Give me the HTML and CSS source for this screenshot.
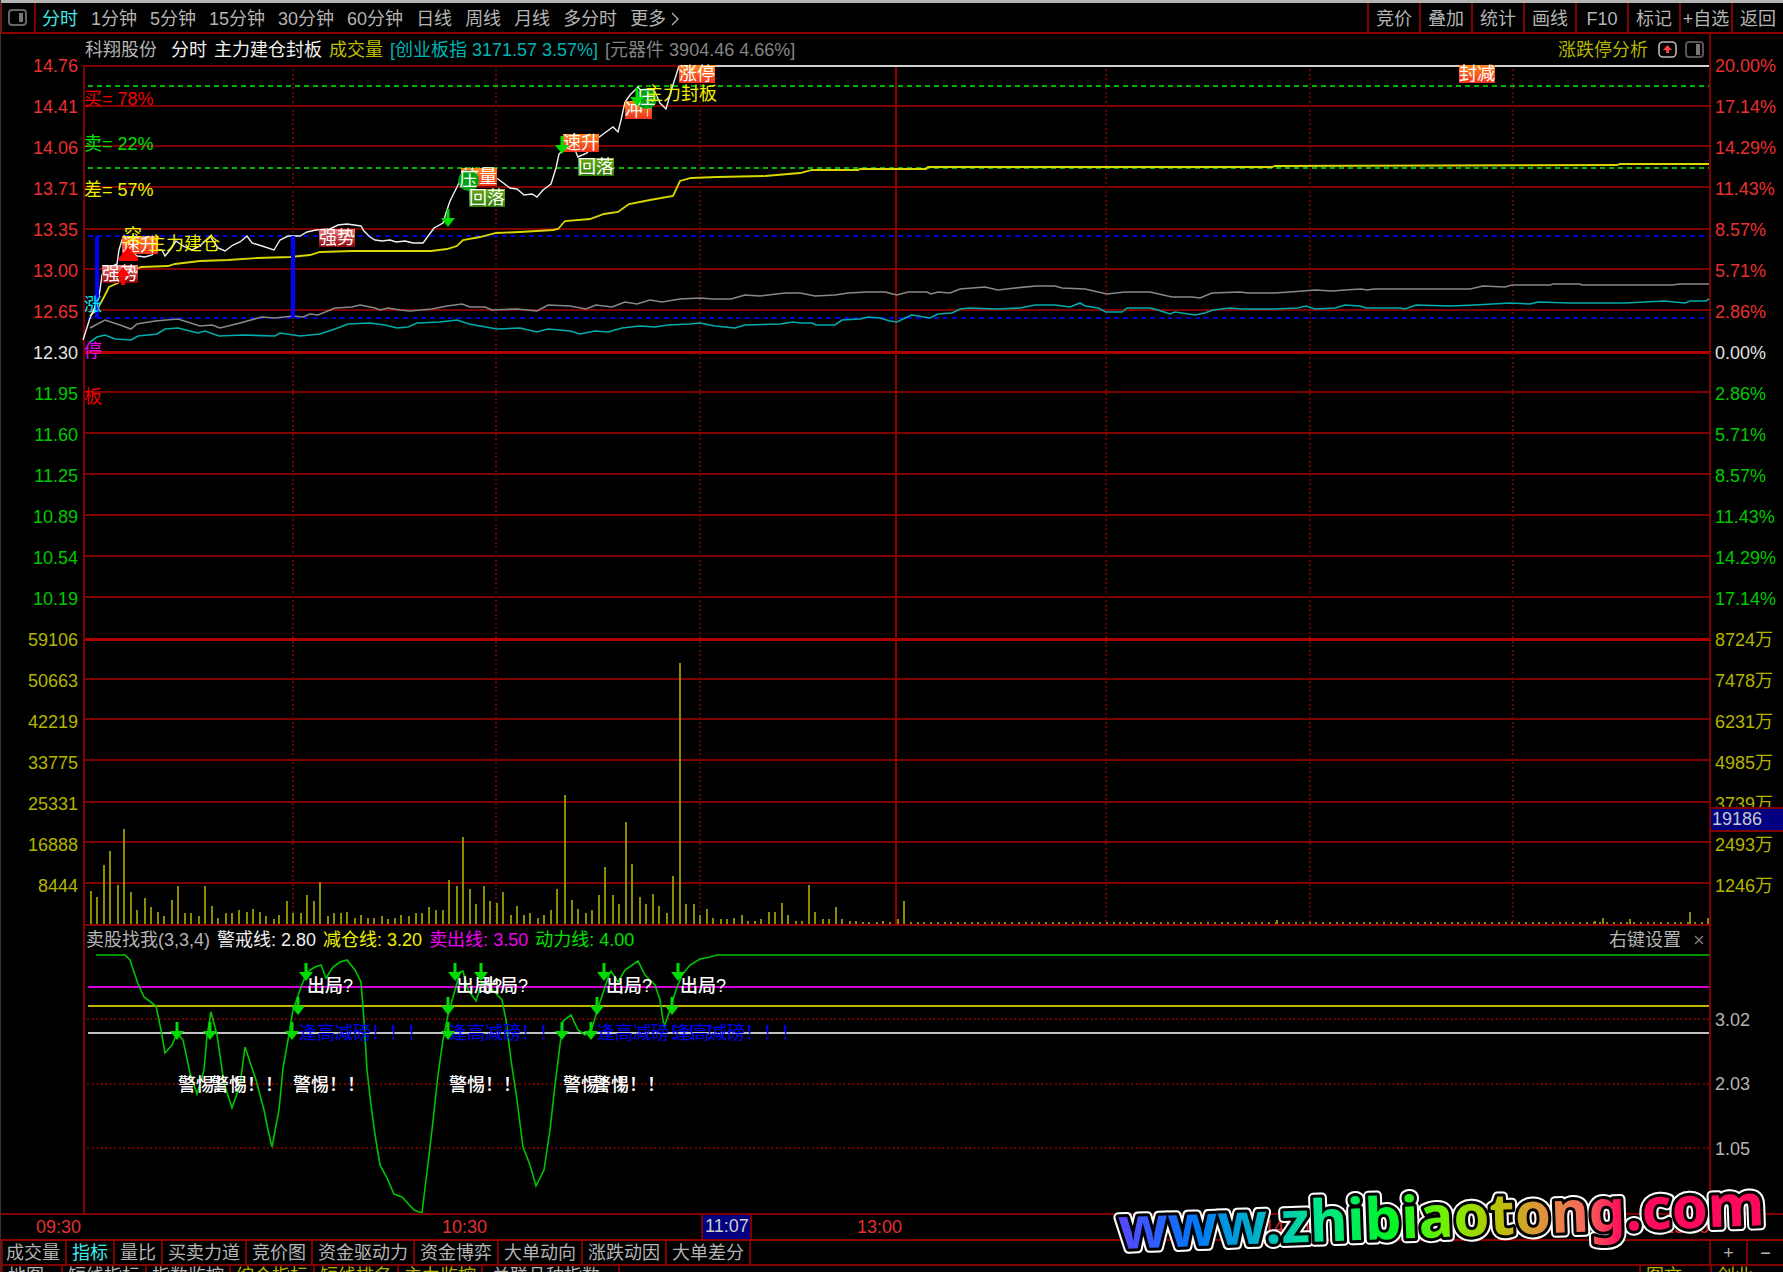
FILE: index.html
```html
<!DOCTYPE html>
<html lang="zh-CN">
<head>
<meta charset="utf-8">
<title>科翔股份 分时</title>
<link rel="stylesheet" href="styles.css">
</head>
<body>
<div class="app">
  <header class="topbar">
    <button class="panel-toggle" aria-label="侧栏"><svg class="icon" viewBox="0 0 20 18"><rect x="1" y="1" width="17" height="15" rx="3" fill="none" stroke="#666" stroke-width="2"/><rect x="11" y="4" width="4" height="9" fill="#777"/></svg></button>
    <nav class="periods">
      <button class="period active">分时</button>
      <button class="period">1分钟</button>
      <button class="period">5分钟</button>
      <button class="period">15分钟</button>
      <button class="period">30分钟</button>
      <button class="period">60分钟</button>
      <button class="period">日线</button>
      <button class="period">周线</button>
      <button class="period">月线</button>
      <button class="period">多分时</button>
      <button class="period more">更多<svg class="chevron" viewBox="0 0 10 16"><path d="M2 2 L8 8 L2 14" fill="none" stroke="#b4b4b4" stroke-width="1.3"/></svg></button>
    </nav>
    <nav class="tools">
      <button class="tool">竞价</button>
      <button class="tool">叠加</button>
      <button class="tool">统计</button>
      <button class="tool">画线</button>
      <button class="tool">F10</button>
      <button class="tool">标记</button>
      <button class="tool">+自选</button>
      <button class="tool">返回</button>
    </nav>
  </header>

  <main class="board">
    <ul class="axis axis-left">
      <li class="up">14.76</li><li class="up">14.41</li><li class="up">14.06</li><li class="up">13.71</li><li class="up">13.35</li><li class="up">13.00</li><li class="up">12.65</li>
      <li class="flat">12.30</li>
      <li class="down">11.95</li><li class="down">11.60</li><li class="down">11.25</li><li class="down">10.89</li><li class="down">10.54</li><li class="down">10.19</li>
      <li class="vol">59106</li><li class="vol">50663</li><li class="vol">42219</li><li class="vol">33775</li><li class="vol">25331</li><li class="vol">16888</li><li class="vol">8444</li>
    </ul>

    <div class="title-row">
      <span class="stock">科翔股份</span>
      <span class="bright">分时</span>
      <span class="bright">主力建仓封板</span>
      <span class="vol-name">成交量</span>
      <span class="index">[创业板指 3171.57 3.57%]</span>
      <span class="sector">[元器件 3904.46 4.66%]</span>
      <a class="limit-link" href="#">涨跌停分析</a>
      <button class="icon-btn" aria-label="上移"><svg class="icon" viewBox="0 0 20 18"><rect x="1" y="1" width="17" height="15" rx="4" fill="none" stroke="#bbb" stroke-width="1.6"/><path d="M9.5 4 L14 9 H11 V12 H8 V9 H5 Z" fill="#ff4040"/></svg></button>
      <button class="icon-btn" aria-label="右侧栏"><svg class="icon" viewBox="0 0 20 18"><rect x="1" y="1" width="17" height="15" rx="3" fill="none" stroke="#555" stroke-width="2"/><rect x="11" y="3" width="4" height="11" fill="#777"/></svg></button>
    </div>

    <section class="plot price-plot" id="price">
      <svg class="canvas" viewBox="85 65 1624 860" preserveAspectRatio="none"></svg>
    </section>

    <ul class="axis axis-right">
      <li class="up">20.00%</li><li class="up">17.14%</li><li class="up">14.29%</li><li class="up">11.43%</li><li class="up">8.57%</li><li class="up">5.71%</li><li class="up">2.86%</li>
      <li class="flat">0.00%</li>
      <li class="down">2.86%</li><li class="down">5.71%</li><li class="down">8.57%</li><li class="down">11.43%</li><li class="down">14.29%</li><li class="down">17.14%</li>
      <li class="vol">8724万</li><li class="vol">7478万</li><li class="vol">6231万</li><li class="vol">4985万</li><li class="vol">3739万<span class="value-tag">19186</span></li><li class="vol">2493万</li><li class="vol">1246万</li>
    </ul>

    <div class="indicator-row">
      <span class="ind-name">卖股找我(3,3,4)</span>
      <span class="bright">警戒线: 2.80</span>
      <span class="ind-yellow">减仓线: 3.20</span>
      <span class="ind-magenta">卖出线: 3.50</span>
      <span class="ind-green">动力线: 4.00</span>
      <button class="settings">右键设置</button>
      <button class="close" aria-label="关闭"><svg class="cross" viewBox="0 0 10 10"><path d="M1 1 L9 9 M9 1 L1 9" stroke="#888" stroke-width="1.2"/></svg></button>
    </div>

    <section class="plot ind-plot" id="indicator">
      <svg class="canvas" viewBox="85 953 1624 260" preserveAspectRatio="none"></svg>
    </section>
    <ul class="axis axis-ind"><li>3.02</li><li>2.03</li><li>1.05</li></ul>
  </main>

  <div class="time-axis">
    <span class="time">09:30</span><span class="time">10:30</span><span class="time">13:00</span><span class="time">14:00</span><span class="time">15:00</span>
    <span class="time-tag">11:07</span>
  </div>

  <footer class="tabs">
    <button class="tab first">成交量</button>
    <button class="tab active">指标</button>
    <button class="tab">量比</button>
    <button class="tab">买卖力道</button>
    <button class="tab">竞价图</button>
    <button class="tab">资金驱动力</button>
    <button class="tab">资金博弈</button>
    <button class="tab">大单动向</button>
    <button class="tab">涨跌动因</button>
    <button class="tab last">大单差分</button>
    <span class="zoom-pair"><button class="zoom-btn">+</button><button class="zoom-btn">−</button></span>
  </footer>

  <div class="status">
    <span class="cell short">地图</span>
    <span class="cell">短线指标</span>
    <span class="cell">指数监控</span>
    <span class="cell gold">综合指标</span>
    <span class="cell gold">短线排名</span>
    <span class="cell gold">主力监控</span>
    <span class="cell wide">关联品种指数</span>
    <span class="cell gold right">图文</span>
    <span class="cell gold end">创业</span>
  </div>

  <svg class="brand" viewBox="0 0 680 100">
    <defs>
      <linearGradient id="rainbow" x1="0" x2="1" y1="0" y2="0">
        <stop offset="0" stop-color="#5a46ff"/><stop offset=".12" stop-color="#0078f5"/><stop offset=".22" stop-color="#00b4c8"/><stop offset=".31" stop-color="#00e68c"/><stop offset=".42" stop-color="#00f528"/><stop offset=".51" stop-color="#78f000"/><stop offset=".58" stop-color="#b4c800"/><stop offset=".66" stop-color="#e09040"/><stop offset=".72" stop-color="#f56a5a"/><stop offset=".78" stop-color="#ff0a5a"/><stop offset="1" stop-color="#ff0a5a"/>
      </linearGradient>
    </defs>
    <g class="brand-text" transform="rotate(-2.1 18 77)">
      <text x="19" y="77" fill="url(#rainbow)" stroke="#fff" stroke-width="10">www.zhibiaotong.com</text>
      <text aria-hidden="true" x="19" y="77" fill="url(#rainbow)" stroke="#000" stroke-width="6">www.zhibiaotong.com</text>
    </g>
  </svg>
</div>
<script src="chart.js"></script>
</body>
</html>
```

FILE: styles.css
```css
* { box-sizing: border-box; }

body {
  margin: 0;
  background: #000;
  color: #b4b4b4;
  font: 18px/24px "Liberation Sans", "Noto Sans CJK SC", sans-serif;
  overflow: hidden;
}

button {
  margin: 0;
  padding: 0;
  border: 0;
  background: none;
  color: inherit;
  font: inherit;
  white-space: nowrap;
}

ul { margin: 0; padding: 0; list-style: none; }

.app {
  position: relative;
  display: grid;
  grid-template-rows: 34px minmax(0, 1fr) 28px 25px 6px;
  height: 100vh;
  border-left: 1px solid #333;
  overflow: hidden;
}

/* Top bar */
.topbar {
  display: flex;
  border-top: 3px solid #b4b4b4;
  border-bottom: 2px solid #900000;
}
.panel-toggle {
  width: 35px;
  border-left: 1px solid #a00000;
  border-right: 2px solid #800000;
}
.icon { display: block; width: 20px; height: 18px; margin: 0 auto; }
.periods { display: flex; align-items: center; gap: 13px; padding: 2px 0 0 6px; }
.period.active, .tab.active { color: #40e8e8; }
.more { display: flex; align-items: center; gap: 4px; }
.chevron { width: 10px; height: 16px; }
.tools { display: flex; margin-left: auto; }
.tool { width: 52px; border-left: 2px solid #800000; padding-top: 2px; }

/* Chart board */
.board {
  display: grid;
  grid-template-columns: 82px minmax(0, 1fr) 72px;
  grid-template-rows: 31px minmax(0, 860fr) 28px minmax(0, 260fr);
}
.axis { display: flex; flex-direction: column; }
.axis li {
  position: relative;
  flex: 1;
  display: flex;
  align-items: center;
  min-height: 0;
}
.axis-left { grid-area: 1 / 1 / 3 / 2; padding: 12px 5px 19px 0; }
.axis-left li { justify-content: flex-end; }
.axis-right { grid-area: 1 / 3 / 3 / 4; padding: 12px 0 19px 4px; }
.axis-ind { grid-area: 4 / 3 / 5 / 4; padding: 35px 0 32px 4px; }
.up { color: #e83030; }
.flat { color: #e0e0e0; }
.down { color: #00c800; }
.vol { color: #b4b400; }

.value-tag {
  position: absolute;
  top: 24px;
  left: -4px;
  width: 72px;
  height: 25px;
  border-top: 2px solid #800000;
  border-bottom: 2px solid #800000;
  padding-left: 1px;
  background: #000080;
  color: #c8c8c8;
  line-height: 21px;
  z-index: 1;
}

.title-row, .indicator-row {
  display: flex;
  align-items: center;
  gap: 7px;
  padding: 0 4px 0 2px;
  border-right: 2px solid #800000;
  white-space: nowrap;
}
.title-row { grid-area: 1 / 2; }
.indicator-row { grid-area: 3 / 2; border-left: 2px solid #800000; padding: 2px 2px 0 1px; }
.stock { margin-right: 7px; }
.bright { color: #f0f0f0; }
.vol-name { color: #c0c000; }
.index { color: #00b4b4; }
.sector { color: #848484; }
.limit-link { margin-left: auto; margin-right: 3px; color: #b4b400; text-decoration: none; }
.ind-yellow { color: #f0f000; }
.ind-magenta { color: #f000f0; }
.ind-green { color: #00e000; }
.settings { margin-left: auto; margin-right: 3px; }
.close { width: 16px; }
.cross { display: block; width: 10px; height: 10px; margin: 0 auto; }

.plot {
  position: relative;
  min-height: 0;
  border-left: 2px solid #800000;
  border-right: 2px solid #800000;
}
.price-plot { grid-area: 2 / 2; }
.ind-plot { grid-area: 4 / 2; }
.canvas { display: block; position: absolute; width: 100%; height: 100%; overflow: visible; }

/* Signal marks on the chart */
.mark {
  position: absolute;
  height: 18px;
  line-height: 18px;
  white-space: nowrap;
}
.mark.red { color: #f00000; }
.mark.green { color: #00e000; }
.mark.yellow { color: #f0f000; }
.mark.cyan { color: #00f0f0; }
.mark.magenta { color: #f000f0; }
.mark.blue { color: #0000ff; }
.mark.white { color: #fff; font-weight: 500; }
.mark.hot { color: #fff; background: linear-gradient(#ff8a1c, #f03020); }
.mark.strong { color: #fff; background: linear-gradient(#f08080, #8c0000); }
.mark.fall { color: #fff; background: linear-gradient(#6aa812, #2c7a08); }
.mark.press {
  width: 21px;
  height: 21px;
  border-radius: 50%;
  background: #00a014;
  color: #fff;
  line-height: 21px;
  text-align: center;
}

/* Time axis */
.time-axis {
  position: relative;
  display: grid;
  grid-template-columns: 82px 406fr 415fr 407fr 400fr 72px;
  align-items: center;
  border-top: 2px solid #800000;
  border-bottom: 2px solid #900000;
  color: #e03030;
}
.time { padding-right: 2px; text-align: right; }
.time-tag {
  position: absolute;
  left: 39.3%;
  width: 51px;
  height: 100%;
  border: solid #800000;
  border-width: 0 2px;
  background: #000080;
  color: #d0d0d0;
  text-align: center;
  line-height: 22px;
}

/* Bottom tabs */
.tabs { display: flex; border-bottom: 2px solid #800000; }
.tab {
  padding: 0 5px;
  border-left: 2px solid #800000;
}
.tab.first { width: 64px; padding: 0 7px 0 3px; }
.tab.last { border-right: 2px solid #800000; width: 86px; }
.zoom-pair { display: flex; width: 74px; margin-left: auto; }
.zoom-btn { flex: 1; border-left: 2px solid #800000; }

.status { display: flex; overflow: hidden; line-height: 20px; }
.cell { width: 84px; height: 24px; border-left: 2px solid #800000; padding-left: 5px; white-space: nowrap; flex: none; }
.cell.short { width: 60px; }
.cell.wide { width: 139px; border-right: 2px solid #800000; padding-left: 9px; }
.cell.gold { color: #b4b400; }
.cell.right { margin-left: auto; width: 71px; }
.cell.end { width: 73px; }

.brand {
  position: absolute;
  right: 3px;
  bottom: 0;
  width: 680px;
  height: 100px;
  z-index: 2;
}
.brand-text {
  font-family: "Noto Sans", sans-serif;
  font-size: 58px;
  font-weight: 700;
  stroke-linejoin: round;
  paint-order: stroke;
}
```

FILE: chart.js
```js
const NS = 'http://www.w3.org/2000/svg';
const RIGHT = 1709;

function panel(id) {
  const host = document.getElementById(id);
  const base = host.querySelector('svg');
  const vb = base.viewBox.baseVal;
  let layer = base;
  const add = (tag, attrs) => {
    const el = document.createElementNS(NS, tag);
    for (const k in attrs) el.setAttribute(k, attrs[k]);
    layer.appendChild(el);
  };
  return {
    hline(y, color, w = 2, dash, x1 = 85) {
      const a = { x1, x2: RIGHT, y1: y, y2: y, stroke: color, 'stroke-width': w, 'shape-rendering': 'crispEdges' };
      if (dash) a['stroke-dasharray'] = dash;
      add('line', a);
    },
    vline(x, y1, y2, color, w, dash) {
      const a = { x1: x, x2: x, y1, y2, stroke: color, 'stroke-width': w, 'shape-rendering': 'crispEdges' };
      if (dash) a['stroke-dasharray'] = dash;
      add('line', a);
    },
    curve(points, color, w) {
      add('polyline', { points, fill: 'none', stroke: color, 'stroke-width': w });
    },
    shape(d, fill) { add('path', { d, fill }); },
    down(x, y) {
      this.shape(`M${x - 1.5} ${y}h3v9h5.5l-7 9l-7 -9h5.5z`, '#00dc00');
    },
    mark(text, kind, x, y) {
      const s = document.createElement('span');
      s.className = 'mark ' + kind;
      s.textContent = text;
      s.style.left = (x - vb.x) / vb.width * 100 + '%';
      s.style.top = (y - vb.y) / vb.height * 100 + '%';
      host.appendChild(s);
    },
    /* following shapes go above the marks added so far */
    raise() {
      layer = base.cloneNode(false);
      host.appendChild(layer);
    }
  };
}

/* Price and volume */
const p = panel('price');
[106, 146, 187, 229, 269, 310, 392, 433, 474, 515, 556, 597, 679, 719, 760, 802, 842, 883]
  .forEach(y => p.hline(y, '#800000'));
p.hline(66, '#800000');
p.hline(925, '#800000');
p.hline(352.5, '#b00000', 3);
p.hline(639.5, '#b00000', 3);
[293, 496, 700, 1106, 1310, 1513].forEach(x => p.vline(x, 69, 924, '#680000', 2, '2 2.5'));
p.vline(896, 65, 925, '#900000', 2);

const vol = [
  91,33, 97,27, 104,59, 110,73, 118,39, 124,95, 131,32, 137,14, 145,26, 151,17, 158,12, 164,8, 172,24, 178,38,
  185,11, 191,11, 199,8, 205,38, 212,18, 218,6, 226,11, 232,11, 239,14, 247,12, 253,15, 260,12, 266,8, 274,5,
  279,9, 287,23, 293,11, 301,11, 307,29, 314,23, 320,42, 328,8, 334,11, 341,11, 347,12, 355,6, 361,9, 368,6,
  374,6, 382,8, 388,5, 395,6, 401,9, 409,8, 416,11, 422,11, 429,17, 436,14, 443,14, 449,44, 457,38, 463,87,
  470,35, 476,20, 484,38, 490,23, 497,21, 503,32, 511,9, 517,18, 524,9, 530,11, 538,6, 544,9, 551,14, 557,35,
  565,129, 572,24, 578,15, 586,11, 592,14, 599,29, 605,57, 613,29, 619,20, 626,102, 632,60, 640,27, 646,20,
  653,30, 659,18, 667,11, 673,48, 680,261, 686,20, 694,20, 700,9, 707,15, 713,6, 721,5, 727,5, 734,6, 742,9,
  748,3, 755,3, 761,5, 769,12, 775,12, 782,21, 788,9, 796,3, 802,3, 809,39, 815,12, 823,5, 829,5, 836,17,
  842,5, 850,3, 856,3, 863,2, 869,2, 877,2, 883,3, 890,2, 898,5, 904,23
];
for (let i = 1; 904 + i * 6.76 < RIGHT; i++) vol.push(Math.round(904 + i * 6.76), 2);
vol.push(1277,4, 1595,3, 1603,6, 1630,5, 1690,12, 1708,6);
for (let i = 0; i < vol.length; i += 2) p.vline(vol[i], 924 - vol[i + 1], 924, '#8c8c00', 2);

p.hline(86, '#00b400', 2, '5 4', 88);
p.hline(168, '#00b400', 2, '5 4', 88);
p.hline(236, '#0000c8', 2, '5 4', 88);
p.hline(318, '#0000c8', 2, '5 4', 88);

p.curve('90,328 105,320 120,325 131,329 137,324 155,321 178,319 200,326 212,325 220,328 240,323 262,317 275,318 293,316 303,317 310,314 318,315 335,308 352,307 360,305 375,308 380,310 388,308 400,310 410,311 432,309 447,306 462,304 470,307 485,307 492,310 517,309 537,311 548,305 570,306 586,309 596,305 612,307 625,302 637,304 650,300 662,302 680,299 700,298 713,299 731,299 745,295 760,296 785,293 800,293 815,296 835,295 848,293 867,292 885,292 897,295 908,292 927,292 931,294 938,292 950,293 960,289 985,287 998,290 1015,288 1036,286 1055,286 1062,288 1085,289 1107,294 1125,292 1150,292 1172,297 1192,297 1200,298 1212,293 1240,292 1248,293 1274,293 1290,292 1315,290 1332,291 1345,290 1361,289 1367,290 1374,289 1470,289 1483,286 1505,287 1512,285 1550,285 1553,284 1580,284 1582,285 1672,285 1680,284 1709,284', '#888888', 1.6);
p.curve('90,342 97,337 105,335 115,339 131,340 138,336 157,334 165,329 178,328 198,333 205,331 219,336 243,335 275,336 280,333 300,336 320,334 335,329 348,324 370,323 385,325 397,328 408,327 417,323 440,322 457,320 469,324 480,326 497,329 520,328 537,332 548,329 570,331 580,334 595,331 608,332 622,328 640,326 655,327 668,325 690,324 700,323 715,326 735,328 745,325 780,324 793,322 800,323 812,323 816,325 835,325 842,320 860,319 868,317 880,318 890,321 897,322 905,318 912,315 930,318 938,314 952,313 960,309 970,308 995,309 1020,308 1035,305 1055,305 1070,307 1080,303 1085,306 1098,308 1106,312 1122,312 1127,308 1150,308 1158,310 1170,314 1175,312 1195,315 1205,313 1213,310 1230,308 1242,309 1275,309 1298,308 1306,306 1315,309 1335,308 1345,305 1360,306 1366,308 1400,308 1405,309 1416,305 1450,306 1475,305 1510,303 1530,304 1538,302 1570,303 1625,303 1664,301 1685,303 1690,301 1706,301 1709,299', '#00acac', 1.6);
p.curve('90,316 98,308 104,297 109,287 118,283 130,272 141,267 168,266 175,264 200,261 228,260 257,258 290,257 310,255 320,252 352,251 431,251 447,249 457,246 463,240 480,237 496,233 520,232 553,230 558,229 565,221 590,219 604,214 618,212 629,204 650,200 673,196 680,181 691,178 717,177 765,176 800,173 812,170 858,170 860,169 926,169 928,167 1272,167 1275,166 1617,165 1620,164 1709,164', '#d8d800', 1.8);
p.curve('83,340 90,318 98,300 100,290 102,275 108,268 117,264 119,250 122,240 124,236 130,250 137,256 145,257 152,255 157,250 162,250 165,256 170,250 176,241 183,246 192,250 200,246 210,236 218,248 225,251 233,245 240,242 247,236 252,243 262,246 274,250 280,240 288,236 300,236 307,232 316,230 330,229 338,225 347,224 361,226 364,231 370,237 375,240 382,241 390,240 396,242 405,241 413,243 423,243 426,239 434,228 443,223 447,210 450,201 457,187 462,176 470,172 480,170 490,176 498,179 502,182 510,188 517,189 524,195 532,194 537,197 543,190 551,184 556,168 559,154 565,148 570,143 575,150 578,157 587,153 593,145 598,138 606,132 613,127 618,132 621,120 625,102 630,95 638,87 645,95 655,92 660,103 666,109 672,88 679,66', '#f0f0f0', 1.4);
p.vline(97, 236, 318, '#0000ff', 4);
p.vline(293, 236, 318, '#0000ff', 4);
p.hline(66, '#d0d0d0', 2, null, 679);

p.mark('买= 78%', 'red', 84, 90);
p.mark('卖= 22%', 'green', 84, 135);
p.mark('差= 57%', 'yellow', 84, 181);
p.mark('涨', 'cyan', 84, 296);
p.mark('停', 'magenta', 84, 342);
p.mark('板', 'red', 84, 388);
p.mark('强势', 'strong', 102, 265);
p.mark('速升', 'hot', 122, 236);
p.mark('突', 'yellow', 124, 227);
p.mark('主力建仓', 'yellow', 148, 235);
p.mark('强势', 'strong', 319, 229);
p.mark('放量', 'hot', 461, 168);
p.mark('压', 'press', 458, 170);
p.mark('回落', 'fall', 469, 189);
p.mark('速升', 'hot', 563, 134);
p.mark('回落', 'fall', 578, 158);
p.mark('冲↑', 'hot', 625, 101);
p.mark('压', 'press', 636, 88);
p.mark('主力封板', 'yellow', 645, 85);
p.mark('涨停', 'hot', 679, 65);
p.mark('封减', 'hot', 1459, 65);
p.raise();
[[448, 209], [562, 136], [637, 88]].forEach(([x, y]) => p.down(x, y));
p.shape('M128 247L138 258V261H119V258Z M123 267L130 276H125V285H121V276H116Z', '#ff0000');

/* Indicator */
const q = panel('indicator');
[1019, 1084, 1148].forEach(y => q.hline(y, '#700000', 2, '2 2.5', 87));
q.hline(987, '#d800d8', 2, null, 88);
q.hline(1006, '#c0b400', 2, null, 88);
q.hline(1033, '#c0c0c0', 2, null, 88);
q.curve('96,955 125,955 130,960 138,984 144,997 156,1006 161,1030 165,1053 172,1045 177,1033 183,1040 190,1073 197,1094 204,1070 207,1036 211,1012 217,1035 224,1083 232,1108 240,1085 245,1047 256,1080 264,1110 268,1130 272,1147 279,1110 283,1068 288,1040 293,1010 300,990 307,972 315,967 321,965 326,978 333,967 340,962 347,960 355,970 361,982 364,1020 367,1070 371,1105 375,1135 380,1165 387,1178 394,1194 402,1197 414,1210 422,1213 426,1180 432,1130 438,1075 443,1040 448,1015 455,990 460,972 463,971 468,990 476,1001 482,982 488,985 502,1000 506,1020 511,1060 517,1100 523,1147 530,1165 536,1186 544,1170 550,1130 555,1085 560,1045 563,1021 571,1015 578,1030 585,1035 592,1028 598,1008 604,990 609,975 611,971 618,982 625,970 638,961 645,975 655,985 660,1000 664,1027 670,1010 676,990 682,975 690,965 700,959 710,957 717,955 1709,955', '#00c400', 1.6);
[299, 449, 597, 673].forEach(x => q.mark('逢高减磅！！！', 'blue', x, 1024));
[307, 456, 482, 606, 680].forEach(x => q.mark('出局?', 'white', x, 977));
[178, 211, 293, 449, 563, 593].forEach(x => q.mark('警惕！！', 'white', x, 1076));
q.raise();
[[306, 963], [455, 963], [481, 963], [604, 963], [678, 963], [298, 997], [448, 997], [597, 997], [672, 997],
 [177, 1022], [210, 1022], [292, 1022], [448, 1022], [562, 1022], [591, 1022]].forEach(([x, y]) => q.down(x, y));
```
